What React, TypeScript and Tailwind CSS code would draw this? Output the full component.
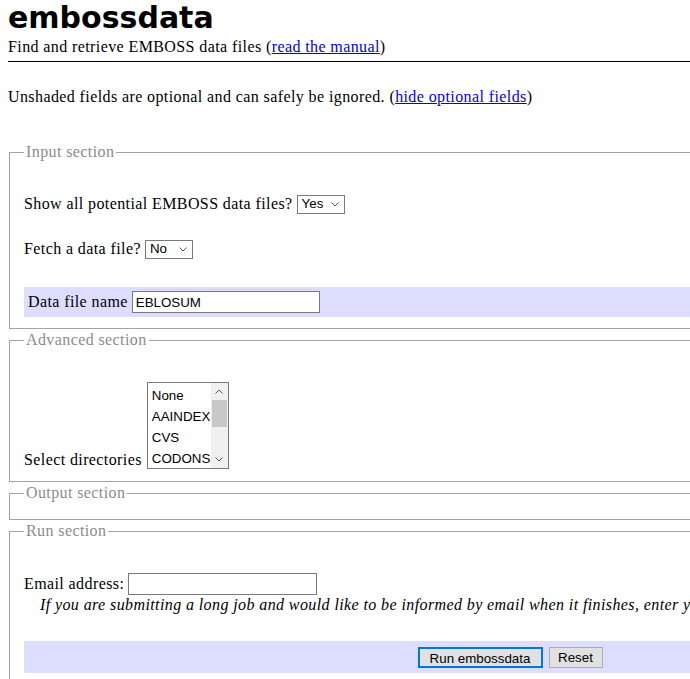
import React from "react";

const serif = "font-['Liberation_Serif','Times_New_Roman',serif] tracking-[0.4px]";
const sans = "font-['Liberation_Sans',Arial,sans-serif] tracking-normal";

function Chevron({ up = false }: { up?: boolean }) {
  return (
    <svg width="8" height="5" viewBox="0 0 8 5" className="block">
      <path
        d={up ? "M0.5 4.5 L4 1 L7.5 4.5" : "M0.5 0.5 L4 4 L7.5 0.5"}
        fill="none"
        stroke="#555"
        strokeWidth="1"
      />
    </svg>
  );
}

function Dropdown({ value }: { value: string }) {
  return (
    <span
      className={`${sans} inline-flex items-center justify-between w-[48px] h-[19px] border border-[#7a7a7a] bg-white pl-[4px] pr-[5px] text-[13.33px] text-black`}
    >
      {value}
      <Chevron />
    </span>
  );
}

function TextBox({ value = "", w }: { value?: string; w: string }) {
  return (
    <input
      readOnly
      value={value}
      className={`${sans} ${w} h-[22px] border border-[#7a7a7a] bg-white px-[3px] text-[13.33px] text-black outline-none`}
    />
  );
}

function Section({
  title,
  className = "",
  children,
}: {
  title: string;
  className?: string;
  children?: React.ReactNode;
}) {
  return (
    <fieldset className={`mx-px border border-[#a3a3a3] px-[14px] ${className}`}>
      <legend className="px-[2px] leading-[18px] text-[#8c8c8c]">{title}</legend>
      {children}
    </fieldset>
  );
}

export default function App() {
  const dirs = ["None", "AAINDEX", "CVS", "CODONS"];
  return (
    <div className="w-[690px] h-[679px] overflow-hidden bg-white">
      <div className={`${serif} w-[1020px] px-2 text-[16px] text-black`}>
        <h1 className="mt-[2px] font-['DejaVu_Sans',Verdana,sans-serif] text-[30px] font-bold leading-[32px] tracking-normal">
          embossdata
        </h1>
        <p className="mt-[4px] leading-[18px]">
          Find and retrieve EMBOSS data files (
          <a href="#" className="text-[#0000ee] underline">
            read the manual
          </a>
          )
        </p>
        <hr className="mt-[5px] border-t border-black" />
        <p className="mt-[26px] leading-[18px]">
          Unshaded fields are optional and can safely be ignored. (
          <a href="#" className="text-[#0000ee] underline">
            hide optional fields
          </a>
          )
        </p>

        <Section title="Input section" className="mt-[37px] pb-[11px]">
          <div className="mt-[32px] flex h-[22px] items-center gap-[4px] leading-[18px]">
            <span>Show all potential EMBOSS data files?</span>
            <Dropdown value="Yes" />
          </div>
          <div className="mt-[23px] flex h-[22px] items-center gap-[4px] leading-[18px]">
            <span>Fetch a data file?</span>
            <Dropdown value="No" />
          </div>
          <div className="mt-[27px] flex h-[30px] items-center gap-[4px] bg-[#ddddff] pl-[4px] leading-[18px]">
            <span>Data file name</span>
            <TextBox value="EBLOSUM" w="w-[188px]" />
          </div>
        </Section>

        <Section title="Advanced section" className="mt-[2px] pb-[12px]">
          <div className="mt-[33px] flex items-end gap-[5px] leading-[18px]">
            <span>Select directories</span>
            <div className="flex h-[87px] w-[82px] overflow-hidden border border-[#7a7a7a] bg-white">
              <div className={`${sans} flex-1 pt-[2px] pl-[4px] text-[13.33px]`}>
                {dirs.map((d) => (
                  <div key={d} className="flex h-[21px] items-center">
                    {d}
                  </div>
                ))}
              </div>
              <div className="flex w-[17px] flex-col items-center bg-[#f0f0f0]">
                <div className="flex h-[17px] items-center justify-center">
                  <Chevron up />
                </div>
                <div className="w-[15px] h-[27px] bg-[#c8c8c8]" />
                <div className="flex-1" />
                <div className="flex h-[17px] items-center justify-center">
                  <Chevron />
                </div>
              </div>
            </div>
          </div>
        </Section>

        <Section title="Output section" className="mt-[2px] h-[36px]" />

        <Section title="Run section" className="mt-[2px] pb-[10px]">
          <div className="mt-[33px] flex h-[22px] items-center gap-[4px] leading-[18px]">
            <span>Email address:</span>
            <TextBox w="w-[189px]" />
          </div>
          <p className="mt-px whitespace-nowrap pl-[16px] italic leading-[18px]">
            If you are submitting a long job and would like to be informed by email when it finishes, enter your email address here.
          </p>
          <div className="mt-[27px] flex h-[32px] items-center justify-center gap-[6px] bg-[#ddddff]">
            <button
              className={`${sans} h-[21px] w-[125px] border-2 border-[#0078d7] bg-[#e1e1e1] text-[13.33px] text-black`}
            >
              Run embossdata
            </button>
            <button
              className={`${sans} h-[21px] w-[54px] border border-[#adadad] bg-[#e1e1e1] text-[13.33px] text-black`}
            >
              Reset
            </button>
          </div>
        </Section>
      </div>
    </div>
  );
}
